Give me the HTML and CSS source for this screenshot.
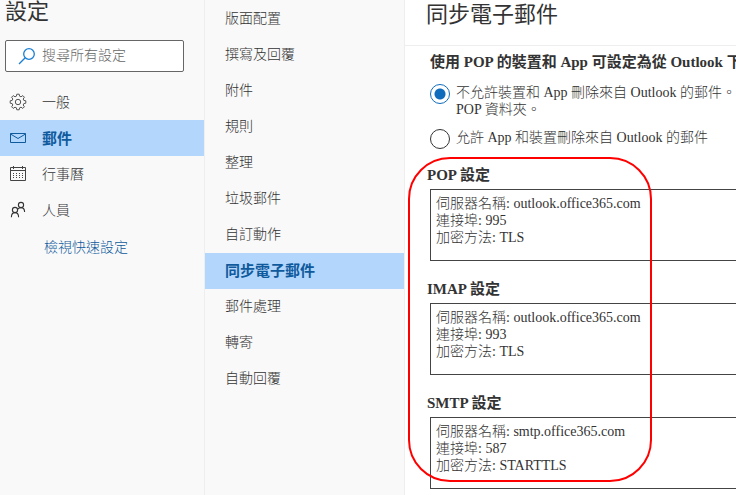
FILE: index.html
```html
<!DOCTYPE html>
<html lang="zh-Hant">
<head>
  <meta charset="UTF-8">
  <meta name="viewport" content="width=device-width, initial-scale=1">
  <title>設定 - 同步電子郵件</title>
  <link rel="stylesheet" href="styles.css">
</head>
<body>
  <div class="settings">

    <aside class="sidebar">
      <h1>設定</h1>
      <div class="search">
        <svg width="18" height="18" viewBox="0 0 18 18" fill="none" stroke="#1a7fd4" stroke-width="1.3">
          <circle cx="11" cy="7" r="5.3"/>
          <path d="M7.2 10.8 1 17"/>
        </svg>
        <input type="text" placeholder="搜尋所有設定" aria-label="搜尋所有設定">
      </div>
      <nav>
        <a href="#" class="item">
          <svg width="18" height="18" viewBox="0 0 18 18" fill="none" stroke="#555" stroke-width="1" stroke-linejoin="round">
            <path d="M7.8 1.2h2.4l.4 2 1.4.6 1.8-1.2 1.6 1.6-1.2 1.8.6 1.4 2 .4v2.4l-2 .4-.6 1.4 1.2 1.8-1.6 1.6-1.8-1.2-1.4.6-.4 2H7.8l-.4-2-1.4-.6-1.8 1.2-1.6-1.6 1.2-1.8-.6-1.4-2-.4V7.8l2-.4.6-1.4-1.2-1.8 1.6-1.6L6 3.8l1.4-.6z"/>
            <circle cx="9" cy="9" r="2.7"/>
          </svg>
          <span>一般</span>
        </a>
        <a href="#" class="item active">
          <svg width="18" height="18" viewBox="0 0 18 18" fill="none" stroke="#0f5a9c" stroke-width="1">
            <path d="M1.5 4.5h15v9h-15z"/>
            <path d="M1.5 5 9 9.5 16.5 5"/>
          </svg>
          <span>郵件</span>
        </a>
        <a href="#" class="item">
          <svg width="18" height="18" viewBox="0 0 18 18" fill="none" stroke="#444" stroke-width="1">
            <path d="M1.5 2.5h15v13h-15zM1.5 5.5h15M4.5 1v3M13.5 1v3"/>
            <path d="M4 8.5h10M4 10.5h10M4 12.5h10" stroke-dasharray="1 2"/>
          </svg>
          <span>行事曆</span>
        </a>
        <a href="#" class="item">
          <svg width="18" height="18" viewBox="0 0 18 18" fill="none" stroke="#333" stroke-width="1.1">
            <circle cx="6" cy="9" r="2.6"/>
            <path d="M2.4 16.2c0-2.800 1.500-4.600 3.600-4.600s3.600 1.800 3.600 4.600"/>
            <circle cx="12" cy="4" r="2.600"/>
            <path d="M8.800 8.200c.8-1 1.900-1.600 3.200-1.600 2.100 0 3.600 1.700 3.600 4.400"/>
          </svg>
          <span>人員</span>
        </a>
      </nav>
      <a href="#" class="quick">檢視快速設定</a>
    </aside>

    <nav class="subnav">
      <a href="#">版面配置</a>
      <a href="#">撰寫及回覆</a>
      <a href="#">附件</a>
      <a href="#">規則</a>
      <a href="#">整理</a>
      <a href="#">垃圾郵件</a>
      <a href="#">自訂動作</a>
      <a href="#" class="active">同步電子郵件</a>
      <a href="#">郵件處理</a>
      <a href="#">轉寄</a>
      <a href="#">自動回覆</a>
    </nav>

    <main>
      <h2>同步電子郵件</h2>

      <fieldset>
        <legend>使用 POP 的裝置和 App 可設定為從 Outlook 下</legend>
        <label class="option">
          <input type="radio" name="pop" checked>
          <span>不允許裝置和 App 刪除來自 Outlook 的郵件。<br>POP 資料夾。</span>
        </label>
        <label class="option">
          <input type="radio" name="pop">
          <span>允許 App 和裝置刪除來自 Outlook 的郵件</span>
        </label>
      </fieldset>

      <div class="servers">
        <div class="server">
          <label for="pop">POP 設定</label>
          <textarea id="pop" readonly>伺服器名稱: outlook.office365.com
連接埠: 995
加密方法: TLS</textarea>
        </div>
        <div class="server">
          <label for="imap">IMAP 設定</label>
          <textarea id="imap" readonly>伺服器名稱: outlook.office365.com
連接埠: 993
加密方法: TLS</textarea>
        </div>
        <div class="server">
          <label for="smtp">SMTP 設定</label>
          <textarea id="smtp" readonly>伺服器名稱: smtp.office365.com
連接埠: 587
加密方法: STARTTLS</textarea>
        </div>
        <div class="marker"></div>
      </div>
    </main>

  </div>
</body>
</html>
```
FILE: styles.css
```css
* {
  box-sizing: border-box;
}
body {
  margin: 0;
  font-family: "Liberation Serif", "Noto Sans CJK TC", serif;
  font-size: 14px;
  font-weight: 300;
  color: #333;
  background: #fff;
  overflow: hidden;
}
a {
  color: inherit;
  text-decoration: none;
}
.settings {
  display: grid;
  grid-template-columns: 205px 200px 1fr;
  height: 100vh;
}

/* left column */
.sidebar {
  background: #f9f9f9;
  border-right: 1px solid #eee;
}
h1, h2 {
  margin: 0;
  font-size: 22px;
  font-weight: 400;
}
h1 {
  padding-left: 5px;
  line-height: 24px;
}
.search {
  display: flex;
  align-items: center;
  gap: 6px;
  height: 32px;
  margin: 16px 20px 12px 5px;
  padding: 0 12px;
  border: 1px solid #666;
  border-radius: 2px;
  background: #fff;
}
.search svg {
  flex: none;
}
.search input {
  width: 100%;
  min-width: 0;
  padding: 0;
  border: 0;
  outline: 0;
  background: none;
  font: inherit;
}
.search input::placeholder {
  color: #666;
  opacity: 1;
}
.item {
  display: flex;
  align-items: center;
  gap: 15px;
  height: 36px;
  padding-left: 9px;
}
.item span {
  padding-bottom: 2px;
}
.active {
  background: #b3d6fc;
  color: #0f5a9c;
  font-size: 15px;
  font-weight: 700;
}
.quick {
  display: block;
  padding-left: 44px;
  line-height: 40px;
  color: #0f5a9c;
}

/* middle column */
.subnav {
  padding-top: 1px;
  background: #f9f9f9;
  border-right: 1px solid #eee;
}
.subnav a {
  display: block;
  padding-left: 20px;
  line-height: 36px;
}

/* content */
main {
  min-width: 0;
  overflow: hidden;
  white-space: nowrap;
}
h2 {
  padding: 0 0 15px 21px;
  line-height: 30px;
  border-bottom: 1px solid #eee;
}
fieldset {
  min-width: 0;
  margin: 0;
  padding: 0 0 0 25px;
  border: 0;
}
legend {
  padding: 0;
  font-size: 15px;
  font-weight: 700;
  line-height: 32px;
}
.option {
  display: flex;
  align-items: flex-start;
  gap: 6px;
  margin-top: 6px;
  line-height: 17px;
}
.option + .option {
  margin-top: 11px;
}
.option input {
  appearance: none;
  flex: none;
  width: 20px;
  height: 20px;
  margin: 0;
  border: 1px solid #333;
  border-radius: 50%;
}
.option input:checked {
  border-color: #0f6cbd;
  background: radial-gradient(circle, #0f6cbd 5px, transparent 6px);
}
.servers {
  position: relative;
  padding-top: 16px;
}
.server {
  margin-bottom: 18px;
}
.server label {
  display: block;
  margin-bottom: 4px;
  padding-left: 22px;
  font-size: 15px;
  font-weight: 700;
  line-height: 20px;
}
.server textarea {
  display: block;
  width: 100%;
  height: 72px;
  margin-left: 25px;
  padding: 5px;
  border: 1px solid #444;
  outline: 0;
  resize: none;
  overflow: hidden;
  background: #fff;
  color: inherit;
  font: inherit;
  line-height: 17px;
}
/* red frame over the server settings */
.marker {
  position: absolute;
  top: 8px;
  left: 3px;
  width: 244px;
  height: 325px;
  border: 2px solid #f00;
  border-radius: 42px;
  pointer-events: none;
}
```
